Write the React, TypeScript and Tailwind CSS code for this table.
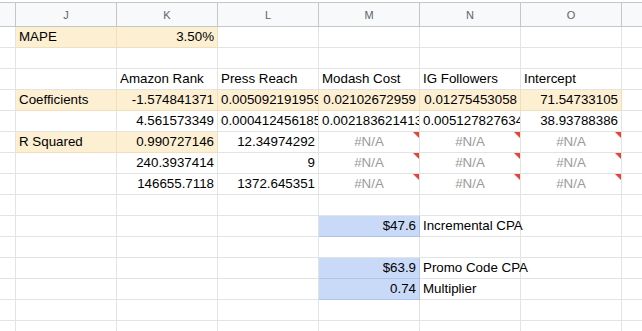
type Cell = {
  t?: string;
  align?: "l" | "r" | "c";
  bg?: "y" | "b";
  na?: boolean;
  clip?: boolean;
};

const NA: Cell = { t: "#N/A", align: "c", na: true };

const rows: Cell[][] = [
  [{ t: "MAPE", bg: "y" }, { t: "3.50%", align: "r", bg: "y" }, {}, {}, {}, {}],
  [{}, {}, {}, {}, {}, {}],
  [{}, { t: "Amazon Rank" }, { t: "Press Reach" }, { t: "Modash Cost" }, { t: "IG Followers" }, { t: "Intercept" }],
  [
    { t: "Coefficients", bg: "y" },
    { t: "-1.574841371", align: "r", bg: "y" },
    { t: "0.005092191959", bg: "y", clip: true },
    { t: "0.02102672959", align: "r", bg: "y" },
    { t: "0.01275453058", align: "r", bg: "y" },
    { t: "71.54733105", align: "r", bg: "y" },
  ],
  [
    {},
    { t: "4.561573349", align: "r" },
    { t: "0.000412456185", clip: true },
    { t: "0.002183621413", clip: true },
    { t: "0.005127827634", clip: true },
    { t: "38.93788386", align: "r" },
  ],
  [{ t: "R Squared", bg: "y" }, { t: "0.990727146", align: "r", bg: "y" }, { t: "12.34974292", align: "r" }, NA, NA, NA],
  [{}, { t: "240.3937414", align: "r" }, { t: "9", align: "r" }, NA, NA, NA],
  [{}, { t: "146655.7118", align: "r" }, { t: "1372.645351", align: "r" }, NA, NA, NA],
  [{}, {}, {}, {}, {}, {}],
  [{}, {}, {}, { t: "$47.6", align: "r", bg: "b" }, { t: "Incremental CPA" }, {}],
  [{}, {}, {}, {}, {}, {}],
  [{}, {}, {}, { t: "$63.9", align: "r", bg: "b" }, { t: "Promo Code CPA" }, {}],
  [{}, {}, {}, { t: "0.74", align: "r", bg: "b" }, { t: "Multiplier" }, {}],
  [{}, {}, {}, {}, {}, {}],
  [{}, {}, {}, {}, {}, {}],
];

const letters = ["J", "K", "L", "M", "N", "O"];

const GridCell = ({ cell }: { cell: Cell }) => {
  const bg =
    cell.bg === "y"
      ? "bg-[#fdefd2] border-[#efdfbc]"
      : cell.bg === "b"
        ? "bg-[#c9daf8] border-[#aec3ea]"
        : "border-[#e2e3e3]";
  const align =
    cell.align === "r" ? "justify-end" : cell.align === "c" ? "justify-center" : "justify-start";
  return (
    <div
      className={`relative flex items-center w-[101px] shrink-0 h-[21px] border-r border-b px-[3px] whitespace-nowrap ${bg} ${align} ${
        cell.clip ? "overflow-hidden" : ""
      }`}
    >
      {cell.t && (
        <span className={cell.na ? "text-[#9a9a9a]" : "text-black"}>{cell.t}</span>
      )}
      {cell.na && (
        <div className="absolute top-0 right-0 w-0 h-0 border-t-[6px] border-l-[6px] border-t-[#ea4335] border-l-transparent" />
      )}
    </div>
  );
};

export default function App() {
  return (
    <div
      className="w-[642px] h-[331px] overflow-hidden bg-white text-[13.33px] leading-5"
      style={{ fontFamily: '"Liberation Sans", Arial, sans-serif' }}
    >
      <div className="mt-[2px] flex h-[25px] border-y border-[#c4c7c5] bg-[#f8f9fa] text-[11px] text-[#5f6368]">
        <div className="w-[16px] shrink-0 border-r border-[#c4c7c5]" />
        {letters.map((l) => (
          <div
            key={l}
            className="w-[101px] shrink-0 flex items-center justify-center border-r border-[#c4c7c5]"
          >
            {l}
          </div>
        ))}
        <div className="flex-1" />
      </div>
      {rows.map((row, i) => (
        <div key={i} className="flex">
          <div className="w-[16px] shrink-0 h-[21px] border-r border-b border-[#e2e3e3]" />
          {row.map((c, j) => (
            <GridCell key={j} cell={c} />
          ))}
          <div className="flex-1 h-[21px] border-b border-[#e2e3e3]" />
        </div>
      ))}
    </div>
  );
}
